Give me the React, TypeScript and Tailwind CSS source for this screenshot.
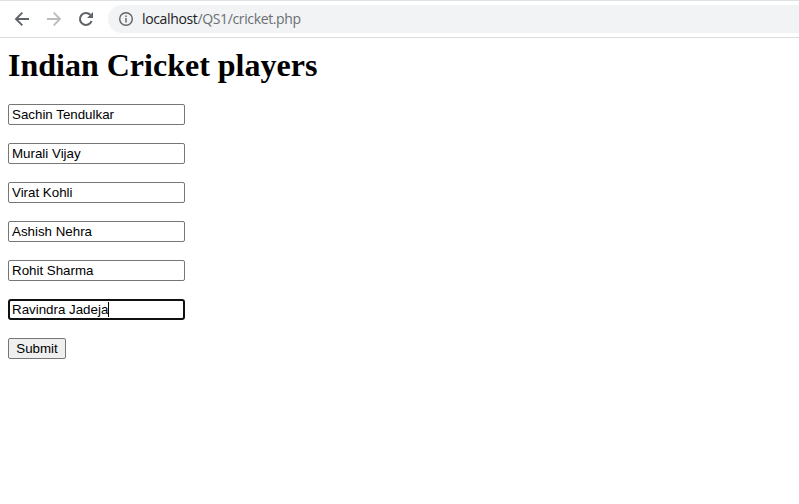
import React from "react";

const players = ["Sachin Tendulkar", "Murali Vijay", "Virat Kohli", "Ashish Nehra", "Rohit Sharma", "Ravindra Jadeja"];

function Toolbar() {
  return (
    <header className="flex h-[38px] items-center border-t border-b border-t-[#dee1e6] border-b-[#dadce0] bg-white pl-[10px]">
      <svg width="24" height="24" viewBox="0 0 24 24" className="mr-2 shrink-0 text-[#5f6368]" fill="none" stroke="currentColor" strokeWidth="1.9">
        <path d="M19 12H6M12.3 5.7 6 12l6.3 6.3" />
      </svg>
      <svg width="24" height="24" viewBox="0 0 24 24" className="mr-2 shrink-0 text-[#babcbe]" fill="none" stroke="currentColor" strokeWidth="1.9">
        <path d="M5 12h13M11.7 5.7 18 12l-6.3 6.3" />
      </svg>
      <svg width="24" height="24" viewBox="0 0 24 24" className="mr-[10px] shrink-0 text-[#5f6368]" fill="none">
        <path d="M17.6 14A6 6 0 1 1 16.3 7.8" stroke="currentColor" strokeWidth="2.1" />
        <path d="M19 5v6h-6z" fill="currentColor" />
      </svg>
      <div className="flex h-7 flex-1 items-center rounded-l-full bg-[#f1f3f4] pl-[10px]">
        <svg width="16" height="16" viewBox="0 0 16 16" className="mr-2 text-[#5f6368]" fill="none" stroke="currentColor" strokeWidth="1.4">
          <circle cx="8" cy="8" r="6.3" />
          <path d="M8 7v4.4M8 4.5V6" />
        </svg>
        <span className="font-['Open_Sans',sans-serif] text-[14px] leading-5 tracking-[-0.36px] text-[#6b6f73]"><span className="text-[#202124]">localhost</span>/QS1/cricket.php</span>
      </div>
    </header>
  );
}

export default function App() {
  return (
    <div className="min-h-screen bg-white text-black">
      <Toolbar />
      <main className="px-2 pt-[9px]">
        <h1 className="mb-5 font-['Liberation_Serif',serif] text-[32px] leading-[37px] font-bold">Indian Cricket players</h1>
        <form className="flex flex-col items-start gap-[18px] font-['Liberation_Sans',sans-serif] text-[13.333px] leading-[15px]">
          {players.map((name, i) => (
            <div key={name} className={i === 5 ? "flex h-[21px] w-[177px] items-center rounded-[3px] border-2 border-[#101010] pl-[2px]" : "flex h-[21px] w-[177px] items-center rounded-[2px] border border-[#767676] pl-[3px]"}>
              <span>{name}</span>
              {i === 5 && <span className="h-[15px] w-px bg-black" />}
            </div>
          ))}
          <button type="button" className="flex h-[21px] w-[58px] items-center justify-center rounded-[2px] border border-[#767676] bg-[#efefef]">Submit</button>
        </form>
      </main>
    </div>
  );
}
